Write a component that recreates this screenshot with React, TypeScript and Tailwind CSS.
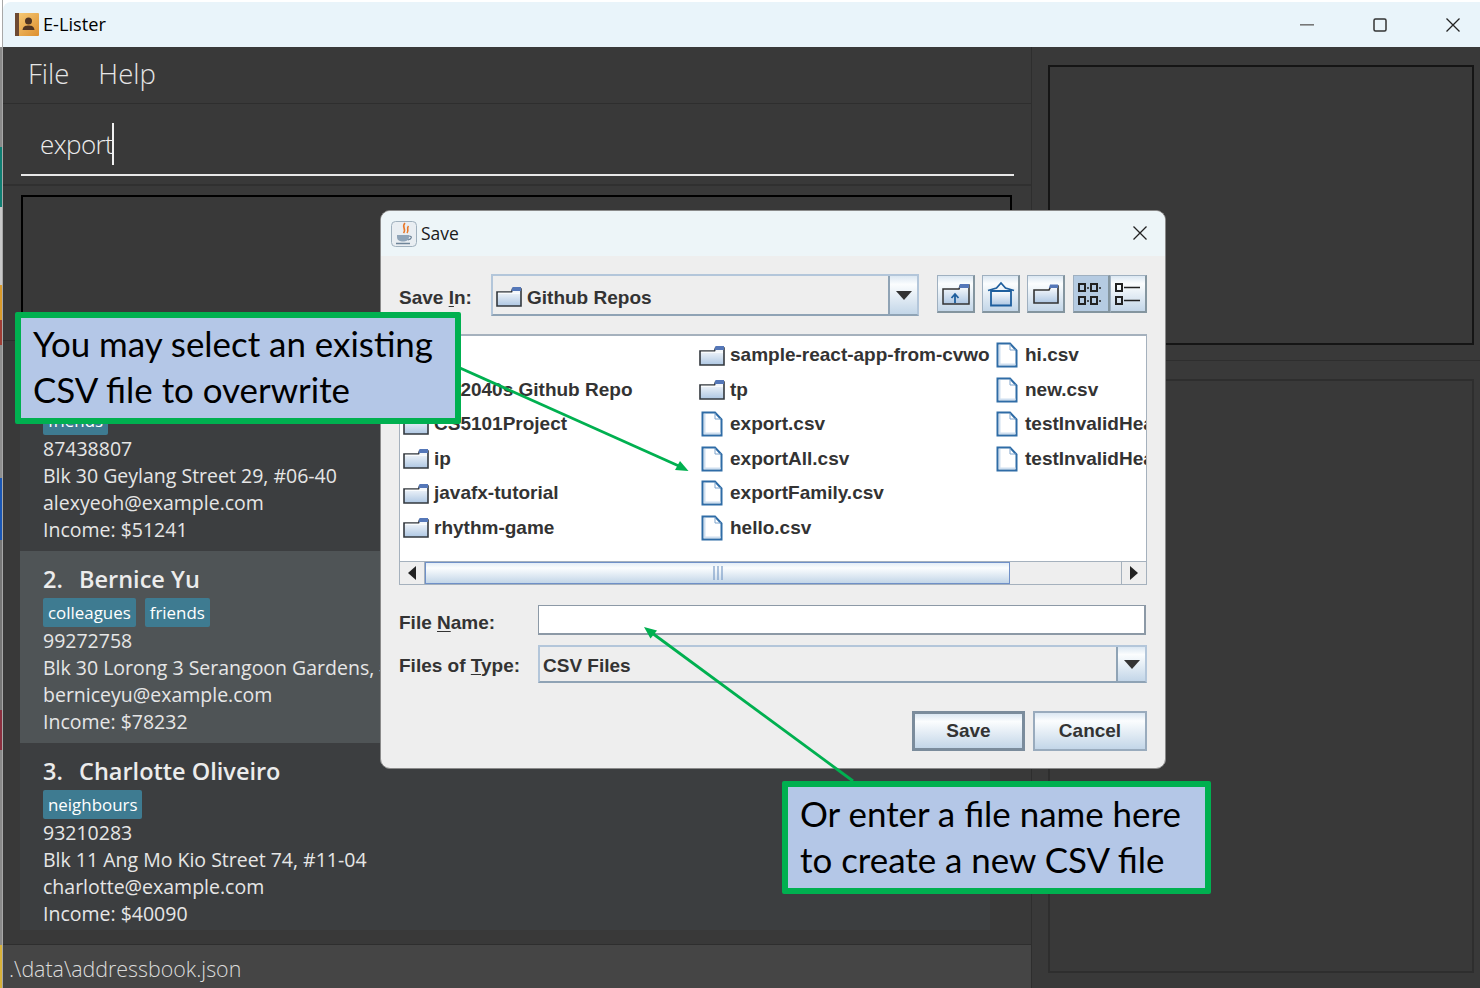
import React from 'react';

const persons = [
  {
    index: '1.',
    name: 'Alex Yeoh',
    tags: ['friends'],
    phone: '87438807',
    address: 'Blk 30 Geylang Street 29, #06-40',
    email: 'alexyeoh@example.com',
    income: 'Income: $51241',
  },
  {
    index: '2.',
    name: 'Bernice Yu',
    tags: ['colleagues', 'friends'],
    phone: '99272758',
    address: 'Blk 30 Lorong 3 Serangoon Gardens, #07-18',
    email: 'berniceyu@example.com',
    income: 'Income: $78232',
    selected: true,
  },
  {
    index: '3.',
    name: 'Charlotte Oliveiro',
    tags: ['neighbours'],
    phone: '93210283',
    address: 'Blk 11 Ang Mo Kio Street 74, #11-04',
    email: 'charlotte@example.com',
    income: 'Income: $40090',
  },
];

const wallpaper = [
  'h-[47px] bg-white',
  'h-[100px] bg-[#8a8a8a]',
  'h-[60px] bg-[#0f7f73]',
  'h-[78px] bg-[#c9c9c9]',
  'h-[35px] bg-[#d99a2b]',
  'h-[25px] bg-[#a13d35]',
  'h-[133px] bg-[#8f8f8f]',
  'h-[62px] bg-[#1a57b5]',
  'h-[170px] bg-[#777777]',
  'h-[40px] bg-[#8c3040]',
  'h-[195px] bg-[#8a8a8a]',
  'h-[43px] bg-[#d9b23a]',
];

const Folder = () => (
  <svg width="26" height="21" viewBox="0 0 26 21" className="shrink-0">
    <path d="M1 6H15.5L16.5 3H25V20H1Z" fill="url(#folderFill)" stroke="#33383e" strokeWidth="1.6" />
    <path d="M16.5 1H25V5H15.5Z" fill="#5577b8" />
    <path d="M2 7.2H24" stroke="#ffffff" strokeWidth="1" />
  </svg>
);

const FileIcon = () => (
  <svg width="22" height="26" viewBox="0 0 22 26" className="shrink-0">
    <path d="M1.5 1.5H14L20.5 8.5V24.5H1.5Z" fill="#ffffff" stroke="#2f6ca6" strokeWidth="2" />
    <path d="M3 3V23H19.5V21.5H4.5V3Z" fill="#cfdff0" />
    <path d="M14 2V8H20" fill="none" stroke="#7ea4cc" strokeWidth="1" />
  </svg>
);

const Arrow = ({ dir }: { dir: 'left' | 'right' | 'down' }) => {
  if (dir === 'down') {
    return (
      <svg width="16" height="9" viewBox="0 0 16 9">
        <path d="M0 0H16L8 9Z" fill="#333333" />
      </svg>
    );
  }
  return (
    <svg width="8" height="14" viewBox="0 0 8 14">
      <path d={dir === 'left' ? 'M8 0V14L0 7Z' : 'M0 0V14L8 7Z'} fill="#222222" />
    </svg>
  );
};

const metal = 'bg-[linear-gradient(180deg,#dbe7f2_0%,#fbfdfe_22%,#c3d6e8_100%)]';

const ToolButton = ({ children, active, className }: { children: React.ReactNode; active?: boolean; className?: string }) => (
  <div
    className={`flex h-[38px] shrink-0 items-center justify-center border border-[#9fb0c0] border-r-2 border-b-2 border-r-[#84959f] border-b-[#84959f] ${
      active ? 'bg-[#b5cbe2]' : metal
    } ${className ?? 'w-[38px]'}`}
  >
    {children}
  </div>
);

const Combo = ({ children, width, height }: { children: React.ReactNode; width: string; height: string }) => (
  <div className={`flex shrink-0 ${width} ${height} border-2 border-[#b3c6da] border-b-[#8fa3b5] bg-[#eeeeee]`}>
    <div className="flex min-w-0 flex-1 items-center gap-[5px] pt-[2px] pl-[3px]">{children}</div>
    <div className={`flex w-[29px] items-center justify-center border-l-2 border-[#8fa3b5] ${metal}`}>
      <Arrow dir="down" />
    </div>
  </div>
);

const Underlined = ({ before, letter, after }: { before: string; letter: string; after: string }) => (
  <span>
    {before}
    <span className="underline underline-offset-2">{letter}</span>
    {after}
  </span>
);

const FileRow = ({ name, kind }: { name: string; kind: 'folder' | 'file' }) => (
  <div className="flex h-[34.5px] items-center overflow-hidden whitespace-nowrap">
    <div className="flex w-[32px] shrink-0 items-center justify-center pr-[5px]">
      {kind === 'folder' ? <Folder /> : <FileIcon />}
    </div>
    {name}
  </div>
);

const PersonCard = ({ person }: { person: (typeof persons)[number] }) => (
  <div className={`h-[192px] pl-[23px] ${person.selected ? 'bg-[#4f5456]' : 'bg-[#3c3e40]'}`}>
    <div className="flex pt-[10px] text-[23.5px] leading-[36px] font-semibold text-[#ececec]">
      <span className="w-[36px]">{person.index}</span>
      <span>{person.name}</span>
    </div>
    <div className="mt-[1px] flex h-[29px] gap-[9px]">
      {person.tags.map((tag) => (
        <span key={tag} className="flex items-center rounded-[2px] bg-[#3e7b91] px-[5px] text-[16.9px] text-white">
          {tag}
        </span>
      ))}
    </div>
    <div className="text-[19.5px] leading-[27px] whitespace-nowrap text-[#e6e6e6]">
      <div>{person.phone}</div>
      <div>{person.address}</div>
      <div>{person.email}</div>
      <div>{person.income}</div>
    </div>
  </div>
);

const Callout = ({ className, lines }: { className: string; lines: string[] }) => (
  <div
    className={`absolute rounded-[2px] border-[6px] border-[#00b050] bg-[#b4c7e7] text-[34.9px] leading-[46px] whitespace-nowrap text-black font-['Lato',sans-serif] ${className}`}
  >
    {lines.map((line) => (
      <div key={line}>{line}</div>
    ))}
  </div>
);

const SaveDialog = () => (
  <div className="absolute top-[210px] left-[380px] flex h-[559px] w-[786px] flex-col overflow-hidden rounded-[10px] border border-[#8a8a8a] bg-[#eeeeee] text-[19px] leading-[22px] font-bold text-[#333333] font-['Liberation_Sans',sans-serif]">
    <svg className="absolute h-0 w-0">
      <defs>
        <linearGradient id="folderFill" x1="0" y1="0" x2="0" y2="1">
          <stop offset="0" stopColor="#ffffff" />
          <stop offset="1" stopColor="#aec7e3" />
        </linearGradient>
      </defs>
    </svg>

    {/* title bar */}
    <div className="flex h-[45px] shrink-0 items-center bg-[#edf5f8] pr-[18px] pl-[10px] font-normal text-[#1a1a1a] font-['Open_Sans',sans-serif]">
      <svg width="26" height="26" viewBox="0 0 26 26">
        <rect x="0.5" y="0.5" width="25" height="25" rx="4" fill="#e9eef2" stroke="#9fb0bd" />
        <path d="M14 2C10 6 16 8 12.5 12M17.5 5C15 8 18.5 9 16 12" fill="none" stroke="#e8792b" strokeWidth="1.6" />
        <path d="M6 14H18V16C18 19.5 15 20.5 12 20.5C9 20.5 6 19.5 6 16Z" fill="#8fa4b8" />
        <path d="M18 15C21.5 15 21 18 17 19" fill="none" stroke="#6f8599" strokeWidth="1.2" />
        <path d="M5 22.5H19" stroke="#6f8599" strokeWidth="1.5" />
      </svg>
      <span className="mb-[2px] ml-[4px] flex-1 text-[17.5px]">Save</span>
      <svg width="14" height="14" viewBox="0 0 14 14" className="mb-[2px]">
        <path d="M0.5 0.5L13.5 13.5M13.5 0.5L0.5 13.5" stroke="#222222" strokeWidth="1.3" />
      </svg>
    </div>

    <div className="flex flex-1 flex-col pr-[18px] pl-[18px]">
      {/* save in */}
      <div className="mt-[18px] flex items-start">
        <div className="mt-[13px] w-[92px] shrink-0">
          <Underlined before="Save " letter="I" after="n:" />
        </div>
        <Combo width="w-[428px]" height="h-[42px]">
          <Folder />
          <span className="pt-[4px]">Github Repos</span>
        </Combo>
        <div className="mt-[1px] ml-[18px] flex gap-[7px]">
          <ToolButton>
            <svg width="28" height="24" viewBox="0 0 28 24">
              <path d="M1 7H17L18.5 3H27V22H1Z" fill="url(#folderFill)" stroke="#333333" strokeWidth="1.5" />
              <path d="M18 2H27V6H17Z" fill="#5577b8" />
              <path d="M13 21V13M9.5 16L13 12L16.5 16" fill="none" stroke="#1f5f9e" strokeWidth="1.8" />
            </svg>
          </ToolButton>
          <ToolButton>
            <svg width="28" height="26" viewBox="0 0 28 26">
              <path d="M4 10H24V24.5H4Z" fill="url(#folderFill)" stroke="#1f5f9e" strokeWidth="1.8" />
              <path d="M1 9.5L9.5 7L14 2L18.5 7L27 9.5" fill="none" stroke="#1f5f9e" strokeWidth="1.8" />
            </svg>
          </ToolButton>
          <ToolButton>
            <svg width="26" height="22" viewBox="0 0 26 22">
              <path d="M1 7H16L18 3H25V20H1Z" fill="url(#folderFill)" stroke="#333333" strokeWidth="1.6" />
              <path d="M17 1.5H25V5H16Z" fill="#5577b8" />
            </svg>
          </ToolButton>
          <div className="ml-[1px] flex">
            <ToolButton active className="w-[37px]">
              <svg width="26" height="24" viewBox="0 0 26 24" fill="none" stroke="#222222" strokeWidth="2">
                <rect x="1" y="2" width="6" height="7" />
                <rect x="13" y="2" width="6" height="7" />
                <rect x="1" y="15" width="6" height="7" />
                <rect x="13" y="15" width="6" height="7" />
                <path d="M9 6H11M21 6H23M9 19H11M21 19H23" strokeWidth="1.5" />
              </svg>
            </ToolButton>
            <ToolButton className="w-[37px]">
              <svg width="26" height="24" viewBox="0 0 26 24" fill="none" stroke="#222222" strokeWidth="2">
                <rect x="1" y="2" width="6" height="7" />
                <rect x="1" y="15" width="6" height="7" />
                <path d="M9 5.5H25M9 18.5H25" strokeWidth="1.6" />
              </svg>
            </ToolButton>
          </div>
        </div>
      </div>

      {/* file list */}
      <div className="mt-[18px] flex h-[251px] w-[748px] flex-col border border-t-2 border-[#a5b1bd] bg-white">
        <div className="grid h-[225px] grid-flow-col grid-cols-[296px_295px_1fr] grid-rows-[repeat(6,34.5px)] pt-[2px] pl-[2px]">
          <div />
          <FileRow kind="folder" name="CS2040s Github Repo" />
          <FileRow kind="folder" name="CS5101Project" />
          <FileRow kind="folder" name="ip" />
          <FileRow kind="folder" name="javafx-tutorial" />
          <FileRow kind="folder" name="rhythm-game" />
          <FileRow kind="folder" name="sample-react-app-from-cvwo" />
          <FileRow kind="folder" name="tp" />
          <FileRow kind="file" name="export.csv" />
          <FileRow kind="file" name="exportAll.csv" />
          <FileRow kind="file" name="exportFamily.csv" />
          <FileRow kind="file" name="hello.csv" />
          <FileRow kind="file" name="hi.csv" />
          <FileRow kind="file" name="new.csv" />
          <FileRow kind="file" name="testInvalidHeader.csv" />
          <FileRow kind="file" name="testInvalidHeaders.csv" />
        </div>
        <div className="flex h-[23px] border-t border-[#a5b1bd] bg-[#eeeeee]">
          <div className="flex w-[25px] items-center justify-center border-r border-[#a5b1bd] bg-[#eeeeee]">
            <Arrow dir="left" />
          </div>
          <div className="flex w-[585px] items-center justify-center border border-[#6f90c8] bg-[linear-gradient(180deg,#e3edf6_0%,#fbfdfe_25%,#c3d6e8_100%)]">
            <svg width="10" height="14" viewBox="0 0 10 14">
              <path d="M1 0V14M5 0V14M9 0V14" stroke="#7a9cc6" strokeWidth="1.2" />
            </svg>
          </div>
          <div className="flex-1" />
          <div className="flex w-[25px] items-center justify-center border-l border-[#a5b1bd] bg-[#eeeeee]">
            <Arrow dir="right" />
          </div>
        </div>
      </div>

      {/* file name and type */}
      <div className="mt-[20px] flex items-center">
        <div className="w-[139px] pt-[6px]">
          <Underlined before="File " letter="N" after="ame:" />
        </div>
        <div className="h-[30px] w-[608px] border border-r-2 border-b-2 border-[#8c99a6] bg-white" />
      </div>
      <div className="mt-[10px] flex items-center">
        <div className="w-[139px] pt-[4px]">
          <Underlined before="Files of " letter="T" after="ype:" />
        </div>
        <Combo width="w-[609px]" height="h-[38px]">
          <span className="pt-[2px]">CSV Files</span>
        </Combo>
      </div>

      {/* actions */}
      <div className="mt-[28px] flex justify-end gap-[8px]">
        <div className={`flex h-[40px] w-[113px] items-center justify-center border-[3px] border-[#7b8c9c] ${metal}`}>Save</div>
        <div className={`flex h-[40px] w-[114px] items-center justify-center border-2 border-[#99abbd] ${metal}`}>Cancel</div>
      </div>
    </div>
  </div>
);

const App = () => {
  return (
    <div className="relative flex h-[988px] w-[1480px] overflow-hidden bg-white font-['Open_Sans',sans-serif]">
      {/* sliver of the desktop behind the window */}
      <div className="flex w-[3px] shrink-0 flex-col border-r border-[#a8a8a8]">
        {wallpaper.map((segment) => (
          <div key={segment} className={segment} />
        ))}
      </div>

      <div className="flex min-w-0 flex-1 flex-col pt-[2px]">
        {/* window title */}
        <div className="flex h-[45px] shrink-0 items-center rounded-tl-[8px] bg-[#e9f4fa] pl-[12px] text-black">
          <svg width="24" height="23" viewBox="0 0 24 23">
            <defs>
              <linearGradient id="bookFill" x1="0" y1="0" x2="1" y2="1">
                <stop offset="0" stopColor="#f7cd7a" />
                <stop offset="1" stopColor="#dd8f2f" />
              </linearGradient>
            </defs>
            <rect x="0" y="0" width="24" height="23" rx="1" fill="url(#bookFill)" />
            <rect x="0" y="0" width="4" height="23" fill="#6d4a33" />
            <circle cx="13.5" cy="8" r="3.5" fill="#4e3423" />
            <path d="M7.5 17C8 13 11 12.5 13.5 12.5C16 12.5 19 13 19.5 17Z" fill="#4e3423" />
          </svg>
          <span className="ml-[4px] flex-1 text-[18.2px]">E-Lister</span>
          <div className="flex items-center gap-[59px] pr-[20px]">
            <svg width="14" height="2" viewBox="0 0 14 2">
              <rect width="14" height="1.6" fill="#777777" />
            </svg>
            <svg width="14" height="14" viewBox="0 0 14 14">
              <rect x="1" y="1" width="12" height="12" rx="1.5" fill="none" stroke="#333333" strokeWidth="1.5" />
            </svg>
            <svg width="14" height="14" viewBox="0 0 14 14">
              <path d="M0.5 0.5L13.5 13.5M13.5 0.5L0.5 13.5" stroke="#222222" strokeWidth="1.3" />
            </svg>
          </div>
        </div>

        <div className="flex min-h-0 flex-1 bg-[#393939]">
          {/* main pane */}
          <div className="flex w-[1029px] flex-col border-r border-[#2e2e2e]">
            <div className="flex h-[57px] shrink-0 items-center gap-[29px] border-b border-[#2e2e2e] pb-[3px] pl-[25px] text-[27.5px] font-light text-[#e6e6e6]">
              <span>File</span>
              <span>Help</span>
            </div>
            <div className="h-[82px] shrink-0 border-b-2 border-[#303030] pt-[18px]">
              <div className="ml-[18px] flex h-[54px] w-[993px] items-center border-b-2 border-[#e8e8e8] pb-[8px] pl-[19px] text-[26px] tracking-[-0.6px] font-light text-[#ededed]">
                export
                <span className="-ml-[1px] h-[42px] w-[2px] bg-[#f0f0f0]" />
              </div>
            </div>
            <div className="h-[155px] shrink-0 border-b border-[#2e2e2e] pt-[9px]">
              <div className="ml-[18px] h-[145px] w-[991px] border-2 border-b-0 border-black" />
            </div>
            <div className="min-h-0 flex-1 pt-[18px]">
              <div className="ml-[17px] h-[571px] w-[970px] overflow-hidden">
                {persons.map((person) => (
                  <PersonCard key={person.name} person={person} />
                ))}
              </div>
            </div>
            <div className="flex h-[44px] shrink-0 items-center border-t border-[#2e2e2e] bg-[#454545] pt-[5px] pl-[6px] text-[21.4px] font-light text-[#dcdcdc]">
              .\data\addressbook.json
            </div>
          </div>

          {/* side pane */}
          <div className="flex flex-1 flex-col">
            <div className="h-[314px] shrink-0 border-b border-[#2e2e2e] pt-[18px] pr-[6px] pl-[16px]">
              <div className="h-[280px] border-2 border-[#151515]" />
            </div>
            <div className="min-h-0 flex-1 pt-[18px] pr-[6px] pb-[15px] pl-[16px]">
              <div className="h-full border-2 border-[#2e2e2e]" />
            </div>
          </div>
        </div>
      </div>

      <SaveDialog />

      {/* annotation arrows */}
      <svg className="pointer-events-none absolute top-0 left-0" width="1480" height="988" viewBox="0 0 1480 988">
        <path d="M460 368L680 466.5" stroke="#00b050" strokeWidth="2.8" />
        <path d="M688.5 471L675 470L680 461Z" fill="#00b050" />
        <path d="M853 781L652 633" stroke="#00b050" strokeWidth="2.8" />
        <path d="M644 627L657 630.5L650.5 638.5Z" fill="#00b050" />
      </svg>

      <Callout
        className="top-[312px] left-[15px] h-[112px] w-[446px] pt-[3px] pl-[12px]"
        lines={['You may select an existing', 'CSV file to overwrite']}
      />
      <Callout
        className="top-[781px] left-[782px] h-[113px] w-[429px] pt-[4px] pl-[12px]"
        lines={['Or enter a file name here', 'to create a new CSV file']}
      />
    </div>
  );
};

export default App;
